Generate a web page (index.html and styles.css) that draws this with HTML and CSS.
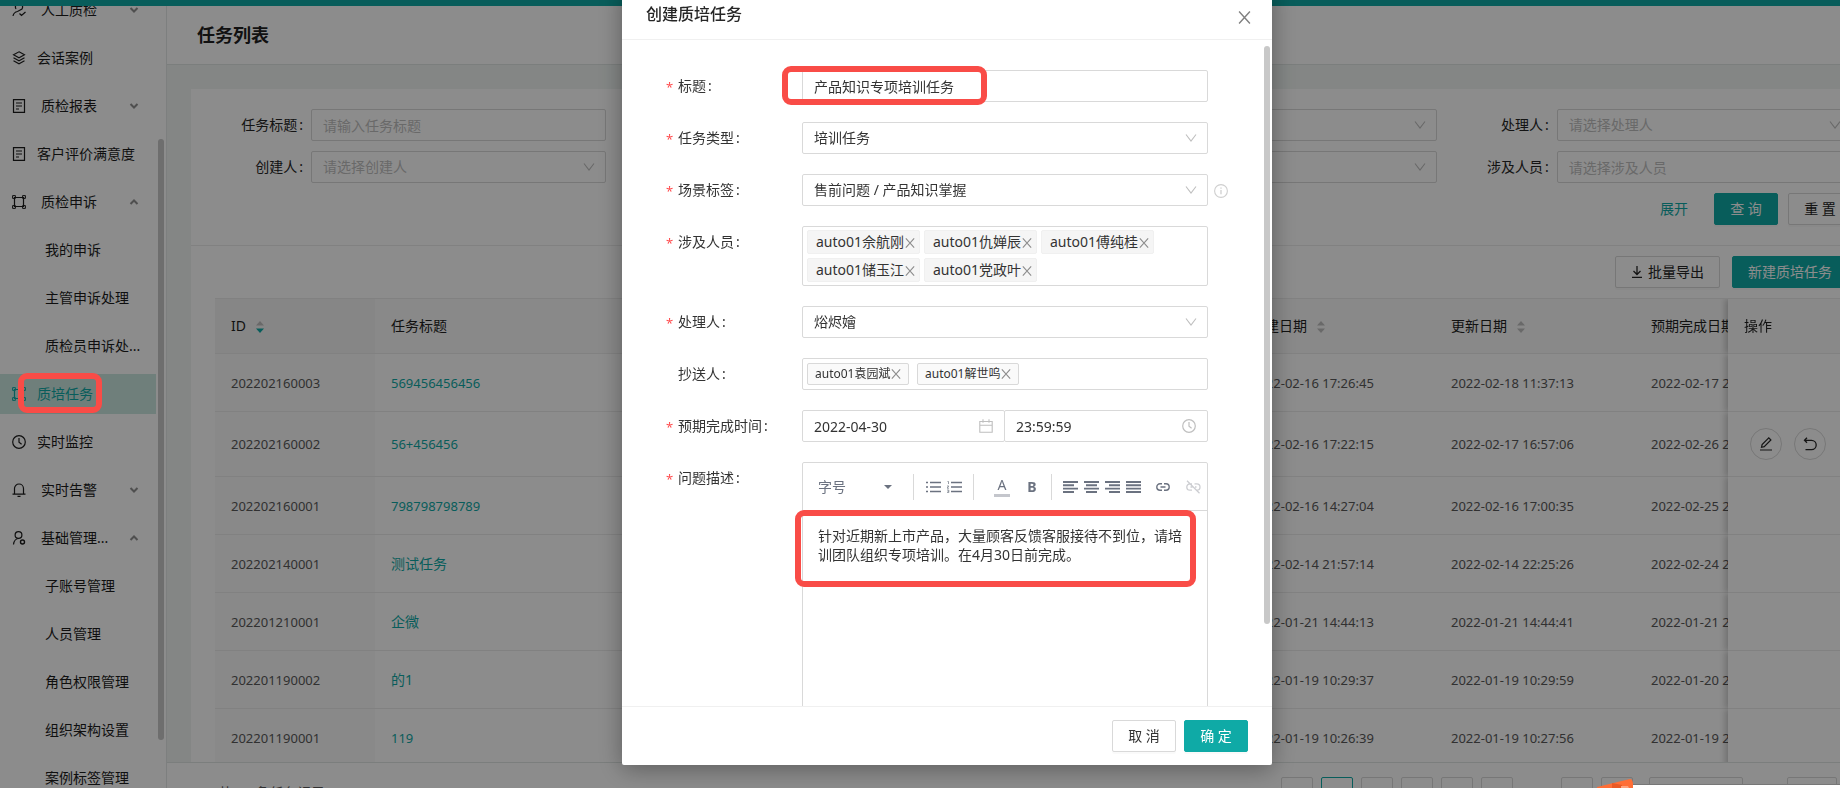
FILE: index.html
```html
<!DOCTYPE html>
<html lang="zh-CN">
<head>
<meta charset="utf-8">
<title>任务列表</title>
<link rel="stylesheet" href="styles.css">
</head>
<body>
<svg class="sprite" aria-hidden="true">
  <symbol id="i-down" viewBox="0 0 12 12"><path d="M1 2.5l5 6.5 5-6.5" fill="none" stroke="currentColor" stroke-width="1.1"/></symbol>
  <symbol id="i-chev" viewBox="0 0 10 10"><path d="M1.5 3l3.5 3.5L8.500 3" fill="none" stroke="currentColor" stroke-width="2"/></symbol>
  <symbol id="i-x" viewBox="0 0 12 12"><path d="M1 .5l10 11M11 .5l-10 11" fill="none" stroke="currentColor" stroke-width="1.300"/></symbol>
  <symbol id="i-doc" viewBox="0 0 14 14"><path d="M1.500 .7h11v12.600h-11zM4 4h6M4 7h6M4 10h3" fill="none" stroke="currentColor" stroke-width="1.200"/></symbol>
  <symbol id="i-frame" viewBox="0 0 14 14"><path d="M2.500 2.500h9v9h-9z" fill="none" stroke="currentColor" stroke-width="1.200"/><path d="M.6.6h2.800v2.800H.6zM10.600.6h2.800v2.800h-2.800zM.6 10.600h2.800v2.800H.6zM10.600 10.600h2.800v2.800h-2.800z" fill="none" stroke="currentColor"/></symbol>
  <symbol id="i-clock" viewBox="0 0 14 14"><circle cx="7" cy="7" r="6.300" fill="none" stroke="currentColor" stroke-width="1.200"/><path d="M7 3v4.300l2.600 2" fill="none" stroke="currentColor" stroke-width="1.200"/></symbol>
  <symbol id="i-sort" viewBox="0 0 10 14"><path class="up" d="M1 5.500L5 1l4 4.500z"/><path class="dn" d="M1 8.500L5 13l4-4.500z"/></symbol>
</svg>

<div class="page">
  <div class="topbar"></div>
  <div class="shell">
    <nav class="side">
      <ul class="menu">
        <li><a class="item" href="#"><svg class="ic" viewBox="0 0 14 14"><path d="M4 6a3.500 3.500 0 1 1 6 0L5.500 8.500C3 9 1.500 10.500 1 13M7.500 10.500l2 2 4-3.500" fill="none" stroke="currentColor" stroke-width="1.200"/></svg><span class="grp">人工质检</span><svg class="chev"><use href="#i-chev"/></svg></a></li>
        <li><a class="item" href="#"><svg class="ic" viewBox="0 0 14 14"><path d="M7 .8l5.500 3L7 6.800l-5.500-3zM1.500 6.800L7 9.800l5.500-3M1.500 9.800l5.500 3 5.500-3" fill="none" stroke="currentColor" stroke-width="1.100"/></svg><span>会话案例</span></a></li>
        <li><a class="item" href="#"><svg class="ic"><use href="#i-doc"/></svg><span class="grp">质检报表</span><svg class="chev"><use href="#i-chev"/></svg></a></li>
        <li><a class="item" href="#"><svg class="ic"><use href="#i-doc"/></svg><span>客户评价满意度</span></a></li>
        <li><a class="item" href="#"><svg class="ic"><use href="#i-frame"/></svg><span class="grp">质检申诉</span><svg class="chev open"><use href="#i-chev"/></svg></a></li>
        <li><a class="item sub" href="#">我的申诉</a></li>
        <li><a class="item sub" href="#">主管申诉处理</a></li>
        <li><a class="item sub" href="#">质检员申诉处...</a></li>
        <li><a class="item on" href="#"><svg class="ic"><use href="#i-frame"/></svg><span>质培任务</span></a></li>
        <li><a class="item" href="#"><svg class="ic"><use href="#i-clock"/></svg><span>实时监控</span></a></li>
        <li><a class="item" href="#"><svg class="ic" viewBox="0 0 14 14"><path d="M2.500 11V5.500a4.500 4.500 0 0 1 9 0V11M.5 11.200h13M5.500 13.400h3" fill="none" stroke="currentColor" stroke-width="1.200"/></svg><span class="grp">实时告警</span><svg class="chev"><use href="#i-chev"/></svg></a></li>
        <li><a class="item" href="#"><svg class="ic" viewBox="0 0 14 14"><circle cx="6.500" cy="4" r="3.400" fill="none" stroke="currentColor" stroke-width="1.200"/><path d="M7 7.500C4 7.500 2 9.500 1.500 13.500" fill="none" stroke="currentColor" stroke-width="1.200"/><circle cx="10.500" cy="11" r="2" fill="none" stroke="currentColor" stroke-width="1.400"/></svg><span class="grp">基础管理...</span><svg class="chev open"><use href="#i-chev"/></svg></a></li>
        <li><a class="item sub" href="#">子账号管理</a></li>
        <li><a class="item sub" href="#">人员管理</a></li>
        <li><a class="item sub" href="#">角色权限管理</a></li>
        <li><a class="item sub" href="#">组织架构设置</a></li>
        <li><a class="item sub" href="#">案例标签管理</a></li>
      </ul>
      <div class="thumb side-thumb"></div>
    </nav>

    <main class="main">
      <header class="head"><h1>任务列表</h1></header>
      <div class="content">
        <section class="card">
          <form class="filter">
            <div class="field"><label for="f1">任务标题<b>:</b></label><input id="f1" class="ctl" placeholder="请输入任务标题"></div>
            <div class="field c3"><div class="sel"><select class="ctl" aria-label="任务类型"><option></option></select><svg class="arr"><use href="#i-down"/></svg></div></div>
            <div class="field"><label for="f3">处理人<b>:</b></label><div class="sel"><select id="f3" class="ctl ph"><option>请选择处理人</option></select><svg class="arr"><use href="#i-down"/></svg></div></div>
            <div class="field"><label for="f4">创建人<b>:</b></label><div class="sel"><select id="f4" class="ctl ph"><option>请选择创建人</option></select><svg class="arr"><use href="#i-down"/></svg></div></div>
            <div class="field c3"><div class="sel"><select class="ctl" aria-label="场景标签"><option></option></select><svg class="arr"><use href="#i-down"/></svg></div></div>
            <div class="field"><label for="f6">涉及人员<b>:</b></label><input id="f6" class="ctl" placeholder="请选择涉及人员"></div>
            <div class="acts"><a href="#" class="more">展开</a><button type="button" class="btn pri">查 询</button><button type="button" class="btn">重 置</button></div>
          </form>
          <div class="tools">
            <button class="btn"><svg class="dl" viewBox="0 0 12 12"><path d="M6 0v8M2.500 5L6 8.500 9.500 5M1 11.300h10" fill="none" stroke="currentColor" stroke-width="1.300"/></svg>批量导出</button>
            <button class="btn pri">新建质培任务</button>
          </div>
          <div class="tablebox">
            <table>
              <colgroup><col class="w-id"><col><col class="w-date"><col class="w-date"><col class="w-date"><col class="w-op"></colgroup>
              <thead><tr><th class="sorted">ID<svg class="sort desc"><use href="#i-sort"/></svg></th><th>任务标题</th><th>创建日期<svg class="sort"><use href="#i-sort"/></svg></th><th>更新日期<svg class="sort"><use href="#i-sort"/></svg></th><th>预期完成日期</th><th class="fix">操作</th></tr></thead>
              <tbody>
                <tr><td class="sorted">202202160003</td><td><a href="#">569456456456</a></td><td>2022-02-16 17:26:45</td><td>2022-02-18 11:37:13</td><td>2022-02-17 23:59:59</td><td class="fix"></td></tr>
                <tr><td class="sorted">202202160002</td><td><a href="#">56+456456</a></td><td>2022-02-16 17:22:15</td><td>2022-02-17 16:57:06</td><td>2022-02-26 23:59:59</td><td class="fix"><div class="ops"><button class="round" aria-label="编辑"><svg viewBox="0 0 14 14"><path d="M2.500 10.300l.6-2.700L9.800.900l2.100 2.100-6.700 6.700zM1 13h12" fill="none" stroke="currentColor" stroke-width="1.200"/></svg></button><button class="round" aria-label="撤回"><svg viewBox="0 0 14 14"><path d="M4 .8L1.500 3.300 4 5.800M1.500 3.300H8.500a4.400 4.400 0 0 1 0 9.400H2.500" fill="none" stroke="currentColor" stroke-width="1.300"/></svg></button></div></td></tr>
                <tr><td class="sorted">202202160001</td><td><a href="#">798798798789</a></td><td>2022-02-16 14:27:04</td><td>2022-02-16 17:00:35</td><td>2022-02-25 23:59:59</td><td class="fix"></td></tr>
                <tr><td class="sorted">202202140001</td><td><a href="#" class="cn">测试任务</a></td><td>2022-02-14 21:57:14</td><td>2022-02-14 22:25:26</td><td>2022-02-24 23:59:59</td><td class="fix"></td></tr>
                <tr><td class="sorted">202201210001</td><td><a href="#" class="cn">企微</a></td><td>2022-01-21 14:44:13</td><td>2022-01-21 14:44:41</td><td>2022-01-21 23:59:59</td><td class="fix"></td></tr>
                <tr><td class="sorted">202201190002</td><td><a href="#" class="cn">的1</a></td><td>2022-01-19 10:29:37</td><td>2022-01-19 10:29:59</td><td>2022-01-20 23:59:59</td><td class="fix"></td></tr>
                <tr><td class="sorted">202201190001</td><td><a href="#">119</a></td><td>2022-01-19 10:26:39</td><td>2022-01-19 10:27:56</td><td>2022-01-19 23:59:59</td><td class="fix"></td></tr>
              </tbody>
            </table>
          </div>
        </section>
      </div>
      <footer class="pager">
        <span class="total">共 48 条任务记录</span>
        <button class="pg" aria-label="上一页"></button><button class="pg cur" aria-label="第1页"></button><button class="pg" aria-label="第2页"></button><button class="pg" aria-label="第3页"></button><button class="pg" aria-label="第4页"></button><button class="pg" aria-label="第5页"></button>
        <span class="dots"></span>
        <button class="pg" aria-label="末页"></button><button class="pg" aria-label="下一页"></button>
        <select class="ctl size" aria-label="每页条数"><option></option></select>
        <input class="ctl jump" aria-label="页码">
      </footer>
    </main>
  </div>
</div>

<div class="mask">
  <div class="modal" role="dialog" aria-labelledby="mt">
    <header class="m-head"><h2 id="mt">创建质培任务</h2><button class="close" aria-label="关闭"><svg><use href="#i-x"/></svg></button></header>
    <div class="m-body">
      <form class="form">
        <label class="req" for="m1">标题<b>:</b></label>
        <div class="cell"><input id="m1" class="ctl" value="产品知识专项培训任务"><i class="mark mark-title"></i></div>

        <label class="req" for="m2">任务类型<b>:</b></label>
        <div class="sel"><select id="m2" class="ctl"><option>培训任务</option></select><svg class="arr"><use href="#i-down"/></svg></div>

        <label class="req" for="m3">场景标签<b>:</b></label>
        <div class="sel"><select id="m3" class="ctl"><option>售前问题 / 产品知识掌握</option></select><svg class="arr"><use href="#i-down"/></svg>
          <svg class="info" viewBox="0 0 14 14"><circle cx="7" cy="7" r="6.400" fill="none" stroke="currentColor" stroke-width="1.100"/><path d="M7 6v4.200M7 3.500v1.300" stroke="currentColor" stroke-width="1.300"/></svg></div>

        <span class="lab req">涉及人员<b>:</b></span>
        <div class="ctl tags">
          <span class="tag">auto01佘航刚<button type="button" aria-label="移除"><svg><use href="#i-x"/></svg></button></span><span class="tag">auto01仇婵辰<button type="button" aria-label="移除"><svg><use href="#i-x"/></svg></button></span><span class="tag">auto01傅纯桂<button type="button" aria-label="移除"><svg><use href="#i-x"/></svg></button></span><span class="tag">auto01储玉江<button type="button" aria-label="移除"><svg><use href="#i-x"/></svg></button></span><span class="tag">auto01党政叶<button type="button" aria-label="移除"><svg><use href="#i-x"/></svg></button></span>
        </div>

        <label class="req" for="m5">处理人<b>:</b></label>
        <div class="sel"><select id="m5" class="ctl"><option>焀烬嬒</option></select><svg class="arr"><use href="#i-down"/></svg></div>

        <span class="lab">抄送人<b>:</b></span>
        <div class="ctl tags small">
          <span class="tag">auto01袁园斌<button type="button" aria-label="移除"><svg><use href="#i-x"/></svg></button></span><span class="tag">auto01解世呜<button type="button" aria-label="移除"><svg><use href="#i-x"/></svg></button></span>
        </div>

        <label class="req" for="m7">预期完成时间<b>:</b></label>
        <div class="when">
          <div class="sel"><input id="m7" class="ctl" value="2022-04-30"><svg class="pick" viewBox="0 0 14 14"><path d="M.8 2.500h12.400v10.700H.800zM.800 6.200h12.400M4 .3v3.500M10 .3v3.500" fill="none" stroke="currentColor" stroke-width="1.100"/></svg></div>
          <div class="sel"><input class="ctl" value="23:59:59" aria-label="时间"><svg class="pick"><use href="#i-clock"/></svg></div>
        </div>

        <label class="req" for="m8">问题描述<b>:</b></label>
        <div class="editor">
          <div class="bar">
            <button type="button" class="fs">字号<i class="caret"></i></button>
            <div class="g g1">
              <button type="button" aria-label="无序列表"><svg width="15" height="12" viewBox="0 0 15 12"><path d="M0 1.500h2M0 6h2M0 10.500h2M4 1.500h11M4 6h11M4 10.500h11" stroke="currentColor" stroke-width="1.600"/></svg></button>
              <button type="button" aria-label="有序列表"><svg width="15" height="12" viewBox="0 0 15 12"><path d="M4 1.500h11M4 6h11M4 10.500h11" stroke="currentColor" stroke-width="1.600"/><path d="M.5.500h1v2.500M0 5h1.800L0 7.200h2M0 9h1.800v2.600H0M.5 10.300h1.300" fill="none" stroke="currentColor" stroke-width=".7"/></svg></button>
            </div>
            <div class="g g2"><button type="button" class="fc">A</button><button type="button" class="fb">B</button></div>
            <div class="g g3">
              <button type="button" aria-label="左对齐"><svg width="15" height="12" viewBox="0 0 15 12"><path d="M0 1h15M0 4.300h11M0 7.600h15M0 11h11" stroke="currentColor" stroke-width="1.900"/></svg></button>
              <button type="button" aria-label="居中"><svg width="15" height="12" viewBox="0 0 15 12"><path d="M0 1h15M2 4.300h11M0 7.600h15M2 11h11" stroke="currentColor" stroke-width="1.900"/></svg></button>
              <button type="button" aria-label="右对齐"><svg width="15" height="12" viewBox="0 0 15 12"><path d="M0 1h15M4 4.300h11M0 7.600h15M4 11h11" stroke="currentColor" stroke-width="1.900"/></svg></button>
              <button type="button" aria-label="两端对齐"><svg width="15" height="12" viewBox="0 0 15 12"><path d="M0 1h15M0 4.300h15M0 7.600h15M0 11h15" stroke="currentColor" stroke-width="1.900"/></svg></button>
            </div>
            <div class="g g4">
              <button type="button" aria-label="链接"><svg width="14" height="8" viewBox="0 0 14 8"><path d="M6 .8H4a3.200 3.200 0 0 0 0 6.400h2M8 .8h2a3.200 3.200 0 0 1 0 6.400H8M4.500 4h5" fill="none" stroke="currentColor" stroke-width="1.400"/></svg></button>
              <button type="button" class="off" aria-label="取消链接"><svg width="15" height="14" viewBox="0 0 15 14"><path d="M6 3.800H4a3.200 3.200 0 0 0 0 6.400h2M8.500 3.800h2.300a3.200 3.200 0 0 1 0 6.400M4.500 7h2M9 7h1.500M1 .8l12.500 12.500" fill="none" stroke="currentColor" stroke-width="1.300"/></svg></button>
            </div>
          </div>
          <textarea id="m8">针对近期新上市产品，大量顾客反馈客服接待不到位，请培训团队组织专项培训。在4月30日前完成。</textarea>
          <i class="mark mark-text"></i>
        </div>
      </form>
      <div class="thumb m-thumb"></div>
    </div>
    <footer class="m-foot"><button class="btn">取 消</button><button class="btn pri">确 定</button></footer>
  </div>
</div>
<i class="mark mark-menu"></i>
<div class="widget"><svg width="38" height="9" viewBox="0 0 38 9"><path d="M0 8L33 0Q35 0 35.500 2L37 9H0z" fill="#ff6e36"/><path d="M15 4l10 2v3H15z" fill="#e85a26"/><path d="M24 7h7l1 2h-8z" fill="#ffa27d"/></svg><div class="panel"></div></div>
</body>
</html>
```
FILE: styles.css
```css
* { box-sizing: border-box; }
html, body { height: 100%; }
body {
  margin: 0;
  overflow: hidden;
  font: 14px/22px "Noto Sans", "Noto Sans CJK SC", sans-serif;
  color: #262626;
  background: #fff;
}
h1, h2, ul { margin: 0; padding: 0; list-style: none; }
a { color: #0faaa6; text-decoration: none; }
button, input, select, textarea { font: inherit; color: inherit; }
button { padding: 0; border: 0; background: none; display: inline-flex; align-items: center; justify-content: center; }
.sprite { position: absolute; width: 0; height: 0; }

.page { display: flex; flex-direction: column; height: 100vh; width: calc(100% + 60px); }
.topbar { flex: none; height: 6px; background: #0faaa6; }
.shell { flex: 1; display: flex; min-height: 0; }

.side { position: relative; flex: none; width: 167px; overflow: hidden; border-right: 1px solid #e4e8e7; color: #1c1c1c; }
.menu { margin-top: -16px; }
.item { display: flex; align-items: center; height: 40px; margin: 0 10px 8px 0; padding-left: 12px; color: inherit; white-space: nowrap; }
.item span { margin-left: 11px; }
.item .grp { margin-left: 15px; }
.item.sub { padding-left: 45px; }
.item.on { background: #cae8e1; color: #0faaa6; }
.ic { width: 14px; height: 14px; }
.chev { width: 10px; height: 10px; margin: 0 17px 0 auto; color: #909090; }
.chev.open { transform: rotate(180deg); }
.thumb { position: absolute; width: 6px; border-radius: 3px; background: #c8c8c8; }
.side-thumb { right: 2px; top: 133px; height: 601px; }

.main { flex: 1; min-width: 0; display: flex; flex-direction: column; }
.head { flex: none; height: 59px; padding: 0 30px; display: flex; align-items: center; border-bottom: 1px solid #e0e6e4; }
.head h1 { font-size: 18px; font-weight: 700; color: #1f1f1f; }
.content { flex: 1; min-height: 0; overflow: hidden; padding: 24px 24px 0; background: #f0f5f3; }
.card { background: #fff; }
.filter { display: grid; grid-template-columns: repeat(4, minmax(0, 1fr)); gap: 10px 24px; padding: 20px 24px; border-bottom: 1px solid #ececec; }
.field { display: flex; justify-content: flex-end; }
.field > .ctl, .field > .sel { flex: none; width: calc(100% - 96px); }
.field label { padding: 5px 8px 5px 0; }
label b, .lab b { margin-left: 2px; font-weight: 400; }
.c3 { grid-column: 3; }
.acts { grid-column: 1 / -1; display: flex; justify-content: flex-end; align-items: center; }
.more { margin-right: 26px; }
.acts .btn + .btn { margin-left: 10px; }

.ctl { width: 100%; height: 32px; padding: 0 11px; border: 1px solid #d9d9d9; border-radius: 2px; background: #fff; appearance: none; outline: 0; }
.ctl::placeholder { color: #bfbfbf; opacity: 1; }
.ph { color: #bfbfbf; }
.sel { position: relative; }
.arr { position: absolute; right: 11px; top: 10px; width: 12px; height: 12px; color: #bfbfbf; pointer-events: none; }

.btn { height: 32px; min-width: 64px; padding: 0 15px; border: 1px solid #d9d9d9; border-radius: 2px; background: #fff; box-shadow: 0 2px 0 rgba(0, 0, 0, .02); white-space: nowrap; }
.btn.pri { border-color: #0faaa6; background: #0faaa6; color: #fff; }
.tools { display: flex; justify-content: flex-end; gap: 12px; padding: 10px 28px 10px 24px; }
.dl { width: 12px; height: 12px; margin-right: 5px; }

.tablebox { margin: 0 24px; overflow: hidden; border-top: 1px solid #ececec; }
table { width: calc(100% + 107px); table-layout: fixed; border-collapse: separate; border-spacing: 0; }
.w-id { width: 160px; }
.w-date { width: 200px; }
.w-op { width: 124px; }
th, td { padding: 16px; border-bottom: 1px solid #ececec; text-align: left; white-space: nowrap; background: #fff; }
th { height: 55px; padding: 0 16px; font-weight: 400; color: #1f1f1f; background: #fafafa; }
td { padding: 12px 16px; height: 58px; font-size: 13px; color: #595959; }
td .cn { font-size: 14px; }
td.sorted { background: #fafafa; }
th.sorted { background: #f5f5f5; }
.fix { position: sticky; right: 0; box-shadow: -3px 0 6px rgba(0, 0, 0, .2); clip-path: inset(0 0 0 -10px); }
.sort { width: 10px; height: 14px; margin-left: 9px; vertical-align: -3px; fill: #bfbfbf; }
.sort.desc { --dn: #0faaa6; }
.dn { fill: var(--dn, #bfbfbf); }
.ops { display: flex; gap: 12px; margin: 4px 6px; }
.round { width: 32px; height: 32px; border: 1px solid #d9d9d9; border-radius: 50%; color: #262626; }
.round svg { width: 14px; height: 14px; }

.pager { flex: none; height: 26px; display: flex; gap: 8px; padding: 14px 63px 0 51px; border-top: 1px solid #e0e6e4; overflow: hidden; }
.total { flex: 1; height: 32px; line-height: 32px; color: #595959; }
.pg { flex: none; width: 32px; height: 32px; border: 1px solid #d9d9d9; border-radius: 2px; }
.pg.cur { border-color: #0faaa6; color: #0faaa6; }
.dots { width: 32px; }
.ctl.size { width: 94px; margin-left: 8px; }
.ctl.jump { width: 50px; margin-left: 36px; }

.mask { position: fixed; inset: 0; display: flex; justify-content: center; align-items: flex-start; overflow: hidden; background: rgba(0, 0, 0, .45); }
.modal { width: 650px; margin: -16px 0 0 54px; border-radius: 2px; background: #fff; box-shadow: 0 4px 24px rgba(0, 0, 0, .35); color: #333; }
.m-head { display: flex; justify-content: space-between; align-items: center; height: 56px; padding: 4px 22px 0 24px; border-bottom: 1px solid #f0f0f0; }
.m-head h2 { font-size: 16px; font-weight: 500; color: #262626; }
.close { width: 12px; height: 12px; color: #808080; }
.close svg { flex: none; width: 13px; height: 13px; margin-top: 7px; }
.m-body { position: relative; max-height: 666px; overflow: hidden; padding: 30px 64px 0 44px; }
.m-thumb { right: 2px; top: 6px; height: 578px; }
.form { display: grid; grid-template-columns: 136px minmax(0, 1fr); row-gap: 20px; }
.form label, .lab { padding: 5px 0 5px 12px; }
.req { position: relative; }
.req::before { content: "*"; position: absolute; left: 0; top: 6px; font-size: 13px; color: #ff4d4f; }
.cell, .editor { position: relative; }
.info { position: absolute; right: -20px; top: 10px; width: 14px; height: 14px; color: #cfcfcf; }
.tags { height: auto; display: flex; flex-wrap: wrap; gap: 4px; padding: 3px 4px; }
.tag { display: flex; align-items: center; justify-content: space-between; width: 113px; height: 24px; padding: 0 4px 0 8px; border: 1px solid #f0f0f0; border-radius: 2px; background: #f5f5f5; white-space: nowrap; }
.tag button, .tag svg { flex: none; width: 10px; height: 10px; color: #8c8c8c; }
.tag button { margin-top: 2px; }
.small { gap: 8px; padding: 4px; font-size: 12px; }
.small .tag { width: 102px; height: 22px; padding: 0 7px; border-color: #d9d9d9; background: #fafafa; }
.small .tag button { margin-top: 0; }
.when { display: grid; grid-template-columns: 1fr 1fr; }
.when .sel + .sel { margin-left: -1px; }
.pick { position: absolute; right: 12px; top: 9px; width: 14px; height: 14px; color: #bfbfbf; }

.editor { height: 260px; border: 1px solid #d9d9d9; border-radius: 2px; }
.bar { display: flex; align-items: center; height: 48px; padding: 0 6px 0 15px; border-bottom: 1px solid #d9d9d9; color: #6b7280; }
.fs { width: 74px; justify-content: space-between; margin-right: 21px; }
.caret { border: 4px solid transparent; border-top-color: #6b7280; border-bottom: 0; }
.g { display: flex; align-items: center; height: 26px; border-left: 1px solid #d9d9d9; }
.g1 { padding-left: 12px; gap: 6px; width: 60px; }
.g2 { padding-left: 20px; width: 78px; }
.g3 { padding-left: 11px; gap: 6px; }
.g4 { flex: 1; justify-content: space-between; border: 0; padding-left: 15px; }
.fc { width: 16px; height: 20px; line-height: 16px; border-bottom: 3px solid #c4c6cc; margin-right: 15px; }
.fb { width: 14px; font-weight: 700; }
.off { color: #cdced2; }
textarea { display: block; width: 100%; height: 200px; padding: 15px; border: 0; outline: 0; resize: none; overflow: hidden; background: none; line-height: 19px; }

.m-foot { display: flex; justify-content: flex-end; gap: 8px; height: 59px; padding: 13px 24px; border-top: 1px solid #f0f0f0; }

.mark { position: absolute; border: 6px solid #f94c47; border-radius: 9px; pointer-events: none; }
.mark-title { left: -20px; top: -4px; width: 205px; height: 39px; }
.mark-text { left: -8px; right: 11px; top: 47px; height: 77px; }
.mark-menu { left: 18px; top: 373px; width: 84px; height: 40px; }
.widget { position: fixed; left: 1597px; right: 0; bottom: 0; display: flex; align-items: flex-end; }
.widget svg { flex: none; display: block; margin-right: -2px; }
.panel { flex: 1; height: 4px; background: #fff; border-top: 1px solid #777; }
```
